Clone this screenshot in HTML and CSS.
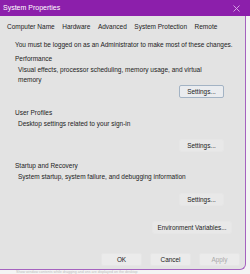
FILE: index.html
```html
<!DOCTYPE html>
<html lang="en">
<head>
<meta charset="utf-8">
<title>System Properties</title>
<link rel="stylesheet" href="styles.css">
</head>
<body>
<div class="titlebar">
  <span class="title">System Properties</span>
  <svg class="close" width="7" height="7" viewBox="0 0 7 7"><path d="M0.5 0.5 L6.5 6.5 M6.5 0.5 L0.5 6.5" stroke="#dcaee8" stroke-width="0.9" fill="none"/></svg>
</div>
<div class="frame">
  <div class="tabs">
    <span class="tab">Computer Name</span>
    <span class="tab">Hardware</span>
    <span class="tab active">Advanced</span>
    <span class="tab">System Protection</span>
    <span class="tab">Remote</span>
  </div>
  <div class="page">
    <p class="notice">You must be logged on as an Administrator to make most of these changes.</p>
    <section class="group perf">
      <h2 class="group-title">Performance</h2>
      <p class="group-desc">Visual effects, processor scheduling, memory usage, and virtual<br>memory</p>
      <div class="group-actions"><button class="btn focused">Settings...</button></div>
    </section>
    <section class="group profiles">
      <h2 class="group-title">User Profiles</h2>
      <p class="group-desc">Desktop settings related to your sign-in</p>
      <div class="group-actions"><button class="btn">Settings...</button></div>
    </section>
    <section class="group startup">
      <h2 class="group-title">Startup and Recovery</h2>
      <p class="group-desc">System startup, system failure, and debugging information</p>
      <div class="group-actions"><button class="btn">Settings...</button></div>
    </section>
    <div class="env-row"><button class="btn env">Environment Variables...</button></div>
  </div>
  <div class="dialog-buttons">
    <button class="btn dlg">OK</button>
    <button class="btn dlg">Cancel</button>
    <button class="btn dlg disabled">Apply</button>
  </div>
</div>
<div class="backdrop">Show window contents while dragging and ons are displayed on the desktop</div>
</body>
</html>
```
FILE: styles.css
```css
* { box-sizing: border-box; }
html, body { margin: 0; padding: 0; }
body {
  width: 250px;
  height: 274px;
  overflow: hidden;
  background: #f4f4f4;
  font-family: "Liberation Sans", Arial, sans-serif;
  color: #222;
  font-size: 6.5px;
}
.titlebar {
  height: 16px;
  background: #8c1fab;
  display: flex;
  align-items: center;
  justify-content: space-between;
  padding: 0 10px 0 3px;
}
.title {
  color: #fff;
  font-size: 7px;
  line-height: 8px;
}
.close { display: block; }
.frame {
  width: 246px;
  height: 254px;
  background: #e3e3e3;
  border-right: 1px solid #a563bf;
  border-bottom: 1px solid #a563bf;
  border-bottom-right-radius: 6px;
  display: flex;
  flex-direction: column;
}
.tabs {
  display: flex;
  gap: 7.5px;
  padding: 7px 0 0 7px;
  line-height: 8px;
  height: 15px;
}
.tab { white-space: nowrap; }
.page {
  display: flex;
  flex-direction: column;
  padding-left: 15px;
}
.notice {
  margin: 9px 0 0;
  line-height: 10px;
  white-space: nowrap;
}
.group { display: flex; flex-direction: column; }
.group-title {
  margin: 10px 0 0;
  font-size: 6.5px;
  font-weight: normal;
  line-height: 10px;
}
.perf .group-title { margin-top: 4px; }
.startup .group-title { margin-top: 9px; }
.group-desc {
  margin: 1px 0 0;
  padding-left: 3px;
  line-height: 10px;
  white-space: nowrap;
}
.group-actions {
  display: flex;
  justify-content: flex-end;
  padding-right: 21px;
  margin-top: 11px;
}
.perf .group-actions { margin-top: 0; }
.profiles .group-actions { margin-top: 10px; }
.btn {
  font-family: inherit;
  font-size: 6.4px;
  color: #222;
  height: 13px;
  width: 45px;
  padding: 0;
  background: #e8e8e8;
  border: 1px solid #e6e6e6;
  border-radius: 2px;
  line-height: 11px;
}
.btn.focused {
  background: #eaecef;
  border-color: #a3b3c4;
}
.env-row {
  display: flex;
  justify-content: flex-end;
  padding-right: 13px;
  margin-top: 15px;
}
.btn.env { width: 80px; }
.dialog-buttons {
  display: flex;
  justify-content: flex-end;
  gap: 8px;
  padding-right: 5px;
  margin-top: 19px;
}
.btn.dlg { width: 41px; background: #ebebeb; }
.btn.disabled { color: #a9a9a9; }
.backdrop {
  padding: 0 0 0 16px;
  color: #bcbcbc;
  font-size: 3.6px;
  line-height: 4px;
  white-space: nowrap;
}
```
